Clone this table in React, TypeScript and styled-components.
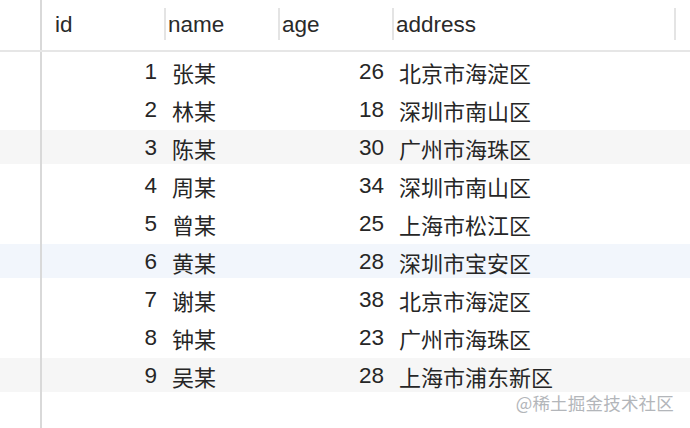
import React from "react";
import styled, { createGlobalStyle } from "styled-components";

const GlobalStyle = createGlobalStyle`
  html, body { margin: 0; padding: 0; background: #ffffff; }
  body {
    font-family: "Liberation Sans", "Noto Sans CJK SC", sans-serif;
    color: #262626;
  }
`;

type Stripe = "none" | "gray" | "blue";

const stripeColor = (s: Stripe) =>
  s === "gray" ? "#f6f6f6" : s === "blue" ? "#f2f6fc" : "transparent";

const rows: { id: number; name: string; age: number; address: string; stripe: Stripe }[] = [
  { id: 1, name: "张某", age: 26, address: "北京市海淀区", stripe: "none" },
  { id: 2, name: "林某", age: 18, address: "深圳市南山区", stripe: "none" },
  { id: 3, name: "陈某", age: 30, address: "广州市海珠区", stripe: "gray" },
  { id: 4, name: "周某", age: 34, address: "深圳市南山区", stripe: "none" },
  { id: 5, name: "曾某", age: 25, address: "上海市松江区", stripe: "none" },
  { id: 6, name: "黄某", age: 28, address: "深圳市宝安区", stripe: "blue" },
  { id: 7, name: "谢某", age: 38, address: "北京市海淀区", stripe: "none" },
  { id: 8, name: "钟某", age: 23, address: "广州市海珠区", stripe: "none" },
  { id: 9, name: "吴某", age: 28, address: "上海市浦东新区", stripe: "gray" },
];

const COLS = "122px 114px 114px 284px 1fr";

const Page = styled.div`
  position: relative;
  width: 690px;
  height: 428px;
  overflow: hidden;
  display: flex;
  flex-direction: column;
  background: #ffffff;
`;

const Header = styled.div`
  display: flex;
  height: 50px;
  flex-shrink: 0;
  border-bottom: 2px solid #e6e6e6;
`;

const Gutter = styled.div`
  width: 40px;
  flex-shrink: 0;
  display: flex;
  flex-direction: column;
  padding-top: 2px;
`;

const GutterCell = styled.div<{ $stripe: Stripe }>`
  height: 34px;
  margin-bottom: 4px;
  background: ${(p) => stripeColor(p.$stripe)};
`;

const VLine = styled.div`
  width: 2px;
  flex-shrink: 0;
  align-self: stretch;
  background: #d9d9d9;
`;

const HeaderGrid = styled.div`
  flex: 1;
  display: grid;
  grid-template-columns: ${COLS};
  align-items: center;
`;

const HeaderCell = styled.div<{ $sep?: boolean; $endSep?: boolean; $pad: number }>`
  position: relative;
  height: 100%;
  display: flex;
  align-items: center;
  padding-left: ${(p) => p.$pad}px;
  padding-bottom: 0;
  font-size: 22.5px;
  color: #2a2a2a;
  box-sizing: border-box;
  &::before {
    content: "";
    display: ${(p) => (p.$sep ? "block" : "none")};
    position: absolute;
    left: 0;
    top: 8px;
    width: 2px;
    height: 32px;
    background: #e4e4e4;
  }
  &::after {
    content: "";
    display: ${(p) => (p.$endSep ? "block" : "none")};
    position: absolute;
    right: 0;
    top: 8px;
    width: 2px;
    height: 32px;
    background: #e4e4e4;
  }
`;

const Body = styled.div`
  flex: 1;
  display: flex;
`;

const Table = styled.div`
  flex: 1;
  display: flex;
  flex-direction: column;
  padding-top: 2px;
`;

const Row = styled.div<{ $stripe: Stripe }>`
  display: grid;
  grid-template-columns: ${COLS};
  height: 34px;
  margin-bottom: 4px;
  padding-top: 1px;
  box-sizing: border-box;
  align-items: center;
  background: ${(p) => stripeColor(p.$stripe)};
  font-size: 22.5px;
  color: #262626;
`;

const NumCell = styled.div<{ $padRight: number }>`
  text-align: right;
  padding-right: ${(p) => p.$padRight}px;
  font-family: "Liberation Sans", sans-serif;
  white-space: nowrap;
`;

const TextCell = styled.div<{ $padLeft: number }>`
  padding-left: ${(p) => p.$padLeft}px;
  font-family: "Noto Sans CJK SC", sans-serif;
  font-size: 22px;
  white-space: nowrap;
  line-height: 1;
`;

const Watermark = styled.div`
  position: absolute;
  right: 16px;
  top: 394px;
  font-family: "Noto Sans CJK SC", sans-serif;
  font-size: 17.5px;
  line-height: 1;
  color: #b3b6ba;
  text-shadow: 0 0 1px #ffffff;
  letter-spacing: 0.2px;
`;

export default function App() {
  return (
    <>
      <GlobalStyle />
      <Page>
        <Header>
          <Gutter />
          <VLine />
          <HeaderGrid>
            <HeaderCell $pad={13}>id</HeaderCell>
            <HeaderCell $sep $pad={4}>name</HeaderCell>
            <HeaderCell $sep $pad={4}>age</HeaderCell>
            <HeaderCell $sep $endSep $pad={4}>address</HeaderCell>
            <div />
          </HeaderGrid>
        </Header>
        <Body>
          <Gutter>
            {rows.map((r) => (
              <GutterCell key={r.id} $stripe={r.stripe} />
            ))}
          </Gutter>
          <VLine />
          <Table>
            {rows.map((r) => (
              <Row key={r.id} $stripe={r.stripe}>
                <NumCell $padRight={7}>{r.id}</NumCell>
                <TextCell $padLeft={8}>{r.name}</TextCell>
                <NumCell $padRight={8}>{r.age}</NumCell>
                <TextCell $padLeft={7}>{r.address}</TextCell>
                <div />
              </Row>
            ))}
          </Table>
        </Body>
        <Watermark>@稀土掘金技术社区</Watermark>
      </Page>
    </>
  );
}
